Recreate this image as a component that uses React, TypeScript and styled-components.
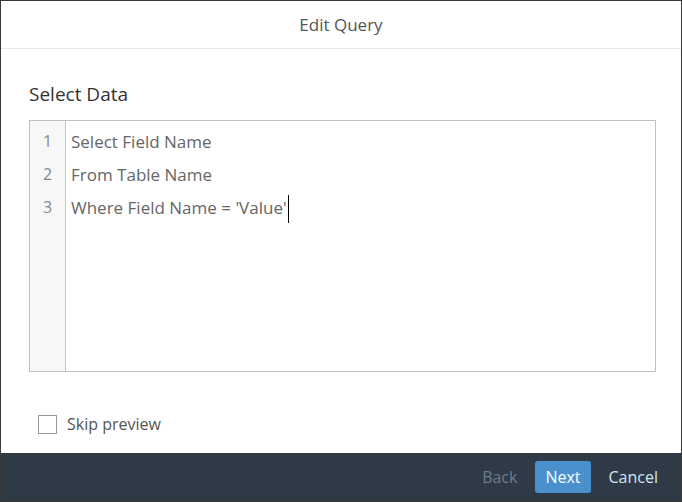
import styled, { createGlobalStyle } from 'styled-components';

const Global = createGlobalStyle`
  html, body { margin: 0; padding: 0; }
  body { font-family: "Open Sans", "Noto Sans", sans-serif; }
`;

const Dialog = styled.div`
  width: 682px;
  height: 502px;
  box-sizing: border-box;
  border: 1px solid #3a3a3a;
  display: flex;
  flex-direction: column;
  background: #fff;
`;

const Header = styled.div`
  height: 47px;
  border-bottom: 1px solid #e8e8e8;
  display: flex;
  align-items: center;
  justify-content: center;
  font-size: 17px;
  color: #555;
`;

const Body = styled.div`
  flex: 1;
  padding: 30px 25px 0 28px;
  display: flex;
  flex-direction: column;
`;

const Heading = styled.div`
  font-size: 19px;
  color: #333;
  line-height: 30px;
  margin-bottom: 11px;
`;

const Editor = styled.div`
  height: 250px;
  border: 1px solid #bfbfbf;
  display: flex;
`;

const Gutter = styled.div`
  width: 35px;
  background: #f7f7f7;
  border-right: 1px solid #c8c8c8;
  padding-top: 4px;
`;

const Lines = styled.div`
  flex: 1;
  padding: 4px 0 0 5px;
`;

const Num = styled.div`
  height: 33px;
  line-height: 33px;
  text-align: center;
  font-size: 16px;
  color: #888;
`;

const Line = styled.div`
  height: 33px;
  line-height: 33px;
  font-size: 17px;
  color: #666;
  white-space: pre;
`;

const Caret = styled.span`
  display: inline-block;
  width: 1px;
  height: 28px;
  background: #000;
  vertical-align: middle;
  margin-left: 1px;
`;

const CheckRow = styled.label`
  display: flex;
  align-items: center;
  gap: 10px;
  margin-top: 41px;
  padding-left: 9px;
  font-size: 16px;
  color: #555;
`;

const Box = styled.span`
  width: 17px;
  height: 17px;
  border: 1px solid #999;
  background: #fff;
`;

const Footer = styled.div`
  height: 48px;
  background: #2e3a46;
  display: flex;
  align-items: center;
  justify-content: flex-end;
  gap: 8px;
  padding-right: 13px;
`;

const Btn = styled.button<{ $primary?: boolean; $disabled?: boolean }>`
  font-family: inherit;
  font-size: 16px;
  height: 32px;
  padding: 0 10px;
  border: none;
  border-radius: 3px;
  cursor: pointer;
  background: ${(p) => (p.$primary ? '#4a90cd' : 'transparent')};
  color: ${(p) => (p.$primary ? '#fff' : p.$disabled ? '#6e7c8a' : '#d1e6f8')};
`;

const code = ['Select Field Name', 'From Table Name', "Where Field Name = 'Value'"];

export default function App() {
  return (
    <>
      <Global />
      <Dialog>
        <Header>Edit Query</Header>
        <Body>
          <Heading>Select Data</Heading>
          <Editor>
            <Gutter>
              {code.map((_, i) => (
                <Num key={i}>{i + 1}</Num>
              ))}
            </Gutter>
            <Lines>
              {code.map((l, i) => (
                <Line key={i}>
                  {l}
                  {i === code.length - 1 && <Caret />}
                </Line>
              ))}
            </Lines>
          </Editor>
          <CheckRow>
            <Box />
            Skip preview
          </CheckRow>
        </Body>
        <Footer>
          <Btn $disabled>Back</Btn>
          <Btn $primary>Next</Btn>
          <Btn>Cancel</Btn>
        </Footer>
      </Dialog>
    </>
  );
}
